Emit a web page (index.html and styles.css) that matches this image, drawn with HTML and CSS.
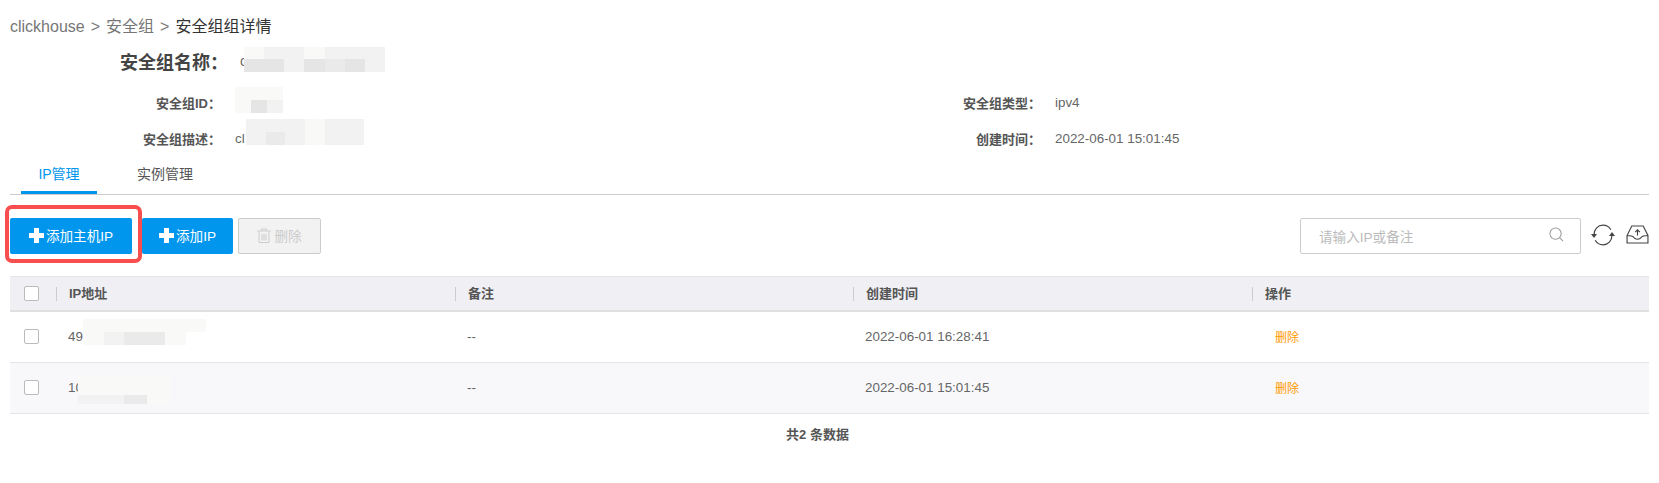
FILE: index.html
```html
<!DOCTYPE html>
<html lang="zh-CN">
<head>
    <meta charset="UTF-8">
    <title>安全组组详情</title>
    <link rel="stylesheet" href="styles.css">
</head>
<body>
<div id="page">
    <div class="crumbs">
        <span>clickhouse</span><i>&gt;</i><span>安全组</span><i>&gt;</i><span class="current">安全组组详情</span>
    </div>

    <div class="title-row">
        <div class="title-label">安全组名称：</div>
        <div class="title-value">c<div class="mosaic mosaic-title">
            <b class="s0"></b><b class="s1"></b><b class="s1"></b><b class="s0"></b><b class="s1"></b><b class="s1"></b><b class="s1"></b>
            <b class="s3"></b><b class="s3"></b><b class="s1"></b><b class="s3"></b><b class="s2"></b><b class="s3"></b><b class="s1"></b>
        </div></div>
    </div>

    <div class="info">
        <div class="info-item">
            <div class="label">安全组ID：</div>
            <div class="value"><div class="mosaic mosaic-id">
                <b class="s0"></b><b class="s0"></b><b class="s0"></b>
                <b class="s0"></b><b class="s3"></b><b class="s1"></b>
            </div></div>
        </div>
        <div class="info-item">
            <div class="label">安全组类型：</div>
            <div class="value">ipv4</div>
        </div>
        <div class="info-item">
            <div class="label">安全组描述：</div>
            <div class="value">cl<div class="mosaic mosaic-desc">
                <b class="s1"></b><b class="s1"></b><b class="s1"></b><b class="s0"></b><b class="s1"></b><b class="s1"></b>
                <b class="s1"></b><b class="s2"></b><b class="s1"></b><b class="s0"></b><b class="s1"></b><b class="s1"></b>
            </div></div>
        </div>
        <div class="info-item">
            <div class="label">创建时间：</div>
            <div class="value">2022-06-01 15:01:45</div>
        </div>
    </div>

    <div class="tabs">
        <div class="tab active">IP管理</div>
        <div class="tab">实例管理</div>
    </div>

    <div class="toolbar">
        <button class="btn btn-primary btn-marked">
            <svg class="plus" viewBox="0 0 15 15"><path d="M5 0h5v5h5v5h-5v5H5v-5H0V5h5z"/></svg>添加主机IP
            <span class="marker"></span>
        </button>
        <button class="btn btn-primary">
            <svg class="plus" viewBox="0 0 15 15"><path d="M5 0h5v5h5v5h-5v5H5v-5H0V5h5z"/></svg>添加IP
        </button>
        <button class="btn btn-disabled">
            <svg class="trash" viewBox="0 0 14 15"><path d="M0 3h14M4.500 3V1h5v2M2 3.500V14.500h10V3.500M5 6v6.500M7 6v6.500M9 6v6.500"/></svg>删除
        </button>
        <div class="search">
            <span class="placeholder">请输入IP或备注</span>
            <svg class="search-icon" viewBox="0 0 16 16"><circle cx="7" cy="7" r="6"/><path d="M11.500 11.500l3.500 3.500"/></svg>
        </div>
        <svg class="tool refresh" viewBox="0 0 24 22"><path d="M3 11C3 5 7 1.200 12 1.200c3.500 0 6.200 1.800 7.800 4.500M21 11c0 6-4 9.800-9 9.800-3.500 0-6.200-1.800-7.800-4.500"/><path class="solid" d="M0 10h6l-3 4zM18 12h6l-3-4z"/></svg>
        <svg class="tool inbox" viewBox="0 0 24 20"><path d="M1 11L6 1h12l5 10v8H1zM1 11c4 0 6 0 7 2 1 1.500 2.500 2 4 2s3-.5 4-2c1-2 3-2 7-2"/><path d="M12 11V5M9.500 7.500L12 5l2.500 2.500"/></svg>
    </div>

    <table class="grid">
        <colgroup>
            <col class="col-check"><col class="col-ip"><col class="col-note"><col class="col-time"><col>
        </colgroup>
        <thead>
            <tr>
                <th><span class="check"></span></th>
                <th><div class="th-text">IP地址</div></th>
                <th><div class="th-text">备注</div></th>
                <th><div class="th-text">创建时间</div></th>
                <th><div class="th-text">操作</div></th>
            </tr>
        </thead>
        <tbody>
            <tr>
                <td><span class="check"></span></td>
                <td class="cell-ip">49<div class="mosaic mosaic-ip">
                    <b class="s0"></b><b class="s0"></b><b class="s0"></b><b class="s0"></b><b class="s0"></b><b class="s0"></b>
                    <b class="s0"></b><b class="s1"></b><b class="s2"></b><b class="s2"></b><b class="s0"></b><b class="n"></b>
                </div></td>
                <td>--</td>
                <td>2022-06-01 16:28:41</td>
                <td><a class="del">删除</a></td>
            </tr>
            <tr class="even">
                <td><span class="check"></span></td>
                <td class="cell-ip">10<div class="mosaic mosaic-ip2">
                    <b class="s0"></b><b class="s0"></b><b class="s0"></b><b class="s0"></b>
                    <b class="s0"></b><b class="s0"></b><b class="s0"></b><b class="s0"></b>
                    <b class="s1"></b><b class="s1"></b><b class="s2"></b><b class="s0"></b>
                </div></td>
                <td>--</td>
                <td>2022-06-01 15:01:45</td>
                <td><a class="del">删除</a></td>
            </tr>
        </tbody>
    </table>

    <div class="total">共<b>2</b> 条数据</div>
</div>
</body>
</html>
```

FILE: styles.css
```css
body {
    margin: 0;
    background: #fff;
    color: #666;
    font-family: "Liberation Sans", "Noto Sans CJK SC", sans-serif;
    font-size: 13.4px;
}

#page {
    padding: 15px 10px 0;
}

/* breadcrumb */
.crumbs {
    height: 24px;
    line-height: 24px;
    font-size: 16px;
    color: #777;
}

.crumbs i {
    font-style: normal;
    margin: 0 6px;
}

.crumbs .current {
    color: #333;
}

/* header */
.title-row {
    display: flex;
    align-items: center;
    height: 30px;
    margin-top: 7px;
    margin-bottom: 8px;
}

.title-label {
    width: 218px;
    text-align: right;
    font-size: 18px;
    font-weight: bold;
    color: #444;
}

.title-value {
    margin-left: 12px;
    position: relative;
    font-size: 14px;
}

.info {
    display: grid;
    grid-template-columns: 820px 1fr;
}

.info-item {
    display: flex;
    align-items: center;
    height: 36px;
}

.label {
    width: 211px;
    text-align: right;
    font-size: 13px;
    font-weight: bold;
    color: #555;
}

.value {
    margin-left: 14px;
    position: relative;
}

/* blurred out values */
.mosaic {
    position: absolute;
    display: grid;
    filter: blur(0.6px);
}

.mosaic b { background: #fff; }
.mosaic .s0 { background: #f9f9f8; }
.mosaic .s1 { background: #f1f2f1; }
.mosaic .s2 { background: #eaeaea; }
.mosaic .s3 { background: #e4e5e4; }
.mosaic .n { background: transparent; }

.mosaic-title {
    left: 4px;
    top: -6px;
    width: 141px;
    height: 25px;
    grid-template-columns: repeat(7, 1fr);
    grid-template-rows: 12px 13px;
}

.mosaic-id {
    left: 0;
    top: -15px;
    width: 48px;
    height: 26px;
    grid-template-columns: repeat(3, 1fr);
    grid-template-rows: 1fr 1fr;
}

.mosaic-desc {
    left: 11px;
    top: -12px;
    width: 118px;
    height: 26px;
    grid-template-columns: repeat(6, 1fr);
    grid-template-rows: 1fr 1fr;
}

.mosaic-ip {
    left: 27px;
    top: 7px;
    width: 123px;
    height: 26px;
    grid-template-columns: repeat(6, 1fr);
    grid-template-rows: 1fr 1fr;
}

.mosaic-ip2 {
    left: 22px;
    top: 13px;
    width: 92px;
    height: 28px;
    grid-template-columns: repeat(4, 1fr);
    grid-template-rows: repeat(3, 1fr);
}

/* tabs */
.tabs {
    display: flex;
    height: 37px;
    padding-top: 1px;
    border-bottom: 1px solid #ccc;
    padding-left: 11px;
}

.tab {
    width: 76px;
    height: 34px;
    margin-right: 30px;
    line-height: 34px;
    text-align: center;
    font-size: 14px;
    color: #555;
}

.tab.active {
    color: #0096ed;
    border-bottom: 3px solid #0096ed;
}

/* toolbar */
.toolbar {
    display: flex;
    align-items: center;
    height: 36px;
    margin-top: 23px;
}

.btn {
    display: flex;
    align-items: center;
    justify-content: center;
    box-sizing: border-box;
    height: 36px;
    padding: 0 0 2px;
    border: 1px solid transparent;
    border-radius: 2px;
    font-family: inherit;
    font-size: 13.6px;
}

.btn-primary {
    background: #0096ed;
    color: #fff;
    width: 91px;
    margin-right: 5px;
}

.btn-marked {
    position: relative;
    width: 122px;
    margin-right: 10px;
}

.marker {
    position: absolute;
    left: -6px;
    top: -14px;
    width: 129px;
    height: 50px;
    border: 4px solid #f94e4e;
    border-radius: 7px;
}

.btn-disabled {
    width: 83px;
    background: #f2f2f2;
    border-color: #ccc;
    color: #ccc;
}

.plus {
    width: 15px;
    height: 15px;
    margin-right: 2px;
    fill: #fff;
}

.trash {
    width: 14px;
    height: 15px;
    margin-right: 3px;
    fill: none;
    stroke: #ccc;
    stroke-width: 1;
}

.search {
    display: flex;
    align-items: center;
    justify-content: space-between;
    box-sizing: border-box;
    width: 281px;
    height: 36px;
    margin-left: auto;
    padding: 0 16px 0 18px;
    border: 1px solid #ccc;
    border-radius: 2px;
}

.placeholder {
    font-size: 13.6px;
    color: #bbb;
}

.search-icon {
    width: 15px;
    height: 15px;
    margin-top: -4px;
    fill: none;
    stroke: #999;
    stroke-width: 1.100;
}

.tool {
    fill: none;
    stroke: #444;
    stroke-width: 1.200;
}

.tool .solid {
    fill: #444;
    stroke: none;
}

.refresh {
    width: 24px;
    height: 22px;
    margin-left: 10px;
    margin-top: -2px;
}

.inbox {
    width: 23px;
    height: 19px;
    margin-left: 11px;
    margin-top: -4px;
}

/* table */
.grid {
    width: 1639px;
    margin-top: 22px;
    border-collapse: collapse;
    table-layout: fixed;
}

.col-check { width: 46px; }
.col-ip { width: 399px; }
.col-note { width: 398px; }
.col-time { width: 399px; }

.grid th {
    height: 33px;
    padding: 0;
    background: #efeff4;
    border-top: 1px solid #e5e5e5;
    border-bottom: 2px solid #e0e0e0;
    text-align: left;
    font-size: 13px;
    color: #555;
}

.th-text {
    border-left: 1px solid #ccc;
    padding-left: 12px;
    line-height: 14px;
}

.grid td {
    height: 48px;
    padding: 0 0 2px 12px;
    border-bottom: 1px solid #e5e5e5;
}

.grid td:first-child,
.grid th:first-child {
    padding-left: 14px;
}

.grid tr.even td {
    background: #f8f8fa;
}

.cell-ip {
    position: relative;
}

.check {
    display: block;
    box-sizing: border-box;
    width: 15px;
    height: 15px;
    background: #fff;
    border: 1px solid #bbb;
    border-radius: 2px;
}

.del {
    margin-left: 11px;
    font-size: 12px;
    color: #f90;
}

.total {
    padding: 13px 24px 0 0;
    line-height: 16px;
    text-align: center;
    font-size: 13px;
    font-weight: bold;
    color: #555;
}
```
